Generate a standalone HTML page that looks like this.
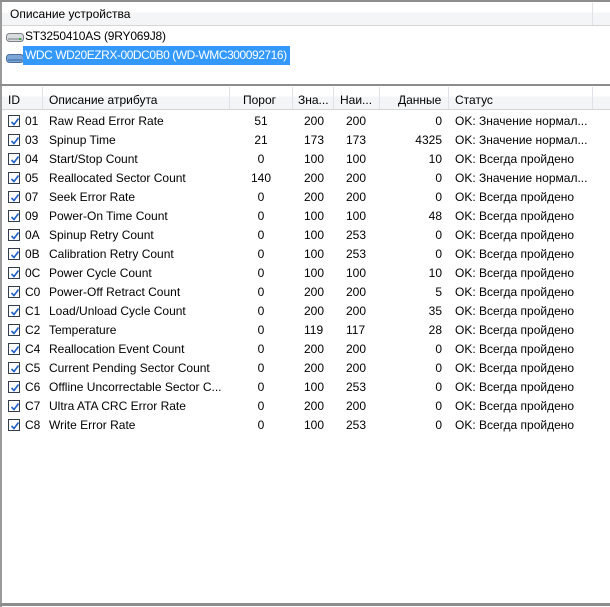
<!DOCTYPE html>
<html><head><meta charset="utf-8"><style>
*{margin:0;padding:0;box-sizing:border-box}
body{width:610px;height:607px;background:#fff;font-family:"Liberation Sans","DejaVu Sans",sans-serif;font-size:12px;color:#000;position:relative;overflow:hidden}
.abs{position:absolute;white-space:nowrap}
.hdr{position:absolute;left:2px;right:0;background:linear-gradient(#fff 0,#fff 45%,#f4f5f7 46%,#f4f5f7 100%);border-bottom:1px solid #d5d5d5}
.vd{position:absolute;width:1px;background:#dfe2e6}
.cb{position:absolute;left:8px;width:13px;height:13px;border:1px solid #333c4a;background:#fff}
.cb svg{position:absolute;left:1px;top:1px}
.r{text-align:right}
.c{text-align:center}
</style></head><body>
<div class="abs" style="left:0;top:0;width:2px;height:607px;background:#9a9a9a"></div>
<div class="abs" style="left:0;top:0;width:610px;height:2px;background:#8d8d8d"></div>
<div class="hdr" style="top:2px;height:24px"></div>
<div class="vd" style="left:592px;top:3px;height:22px"></div>
<div class="abs" style="left:10px;top:7px">Описание устройства</div>
<svg class="abs" style="left:6px;top:33px" width="18" height="9"><rect x="0.5" y="0.5" width="17" height="8" rx="3" fill="#d9dcdf" stroke="#7b7f85"/><rect x="2" y="5" width="14" height="2" fill="#a8adb3"/><rect x="13" y="5" width="2" height="2" fill="#40b040"/></svg>
<div class="abs" style="left:25px;top:29px;letter-spacing:-0.2px">ST3250410AS (9RY069J8)</div>
<svg class="abs" style="left:6px;top:54px" width="18" height="9"><rect x="0.5" y="0.5" width="17" height="8" rx="3" fill="#7aa6d6" stroke="#4a6f9e"/><rect x="2" y="5" width="14" height="2" fill="#5b86ba"/></svg>
<div class="abs" style="left:23px;top:46px;width:267px;height:19px;background:#3399ff;color:#fff;padding:2px 0 0 2px;letter-spacing:-0.45px;overflow:hidden">WDC WD20EZRX-00DC0B0 (WD-WMC300092716)</div>
<div class="abs" style="left:0;top:84px;width:610px;height:2px;background:#8d8d8d"></div>
<div class="abs" style="left:0;top:603px;width:610px;height:3px;background:#8d8d8d"></div>
<div class="hdr" style="top:86px;height:24px"></div>
<div class="vd" style="left:42px;top:87px;height:22px"></div>
<div class="vd" style="left:229px;top:87px;height:22px"></div>
<div class="vd" style="left:292px;top:87px;height:22px"></div>
<div class="vd" style="left:333px;top:87px;height:22px"></div>
<div class="vd" style="left:379px;top:87px;height:22px"></div>
<div class="vd" style="left:448px;top:87px;height:22px"></div>
<div class="vd" style="left:592px;top:87px;height:22px"></div>
<div class="abs" style="left:8px;top:93px">ID</div>
<div class="abs" style="left:49px;top:93px">Описание атрибута</div>
<div class="abs" style="left:243px;top:93px">Порог</div>
<div class="abs" style="left:298px;top:93px">Зна...</div>
<div class="abs" style="left:340px;top:93px">Наи...</div>
<div class="abs" style="left:398px;top:93px">Данные</div>
<div class="abs" style="left:455px;top:93px">Статус</div>
<div id="rows"></div>
<script>
var d=[["01","Raw Read Error Rate","51","200","200","0","OK: Значение нормал..."],
["03","Spinup Time","21","173","173","4325","OK: Значение нормал..."],
["04","Start/Stop Count","0","100","100","10","OK: Всегда пройдено"],
["05","Reallocated Sector Count","140","200","200","0","OK: Значение нормал..."],
["07","Seek Error Rate","0","200","200","0","OK: Всегда пройдено"],
["09","Power-On Time Count","0","100","100","48","OK: Всегда пройдено"],
["0A","Spinup Retry Count","0","100","253","0","OK: Всегда пройдено"],
["0B","Calibration Retry Count","0","100","253","0","OK: Всегда пройдено"],
["0C","Power Cycle Count","0","100","100","10","OK: Всегда пройдено"],
["C0","Power-Off Retract Count","0","200","200","5","OK: Всегда пройдено"],
["C1","Load/Unload Cycle Count","0","200","200","35","OK: Всегда пройдено"],
["C2","Temperature","0","119","117","28","OK: Всегда пройдено"],
["C4","Reallocation Event Count","0","200","200","0","OK: Всегда пройдено"],
["C5","Current Pending Sector Count","0","200","200","0","OK: Всегда пройдено"],
["C6","Offline Uncorrectable Sector C...","0","100","253","0","OK: Всегда пройдено"],
["C7","Ultra ATA CRC Error Rate","0","200","200","0","OK: Всегда пройдено"],
["C8","Write Error Rate","0","100","253","0","OK: Всегда пройдено"]];
var h="";
d.forEach(function(r,i){var y=114+i*19;
h+='<div class="cb" style="top:'+(y+1)+'px;width:12px;height:12px"><svg width="10" height="10"><path d="M1.5 5 L4 7.5 L8.5 1.5" stroke="#1e5fc8" stroke-width="1.6" fill="none"/></svg></div>';
h+='<div class="abs" style="left:25px;top:'+y+'px">'+r[0]+'</div>';
h+='<div class="abs" style="left:49px;top:'+y+'px">'+r[1]+'</div>';
h+='<div class="abs c" style="left:230px;width:62px;top:'+y+'px">'+r[2]+'</div>';
h+='<div class="abs" style="left:304px;top:'+y+'px">'+r[3]+'</div>';
h+='<div class="abs" style="left:346px;top:'+y+'px">'+r[4]+'</div>';
h+='<div class="abs r" style="left:380px;width:62px;top:'+y+'px">'+r[5]+'</div>';
h+='<div class="abs" style="left:455px;top:'+y+'px">'+r[6]+'</div>';});
document.getElementById("rows").innerHTML=h;
</script>
</body></html>
